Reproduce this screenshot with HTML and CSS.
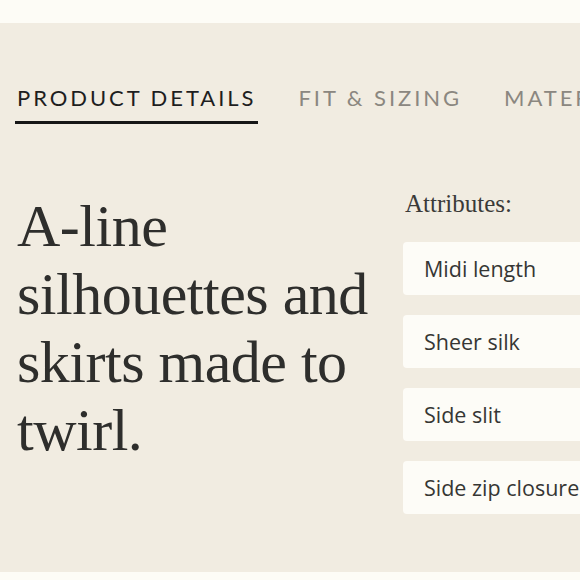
FILE: index.html
```html
<!DOCTYPE html>
<html>
<head>
<meta charset="utf-8">
<link rel="stylesheet" href="styles.css">
</head>
<body>
<div class="top-strip"></div>
<section class="panel">
  <nav class="tabs">
    <span class="tab active">PRODUCT DETAILS</span>
    <span class="tab">FIT &amp; SIZING</span>
    <span class="tab">MATERIALS &amp; CARE</span>
  </nav>
  <div class="content">
    <h1 class="headline">A-line silhouettes and skirts made to twirl.</h1>
    <div class="attrs">
      <div class="attrs-label">Attributes:</div>
      <ul class="attr-list">
        <li class="attr">Midi length</li>
        <li class="attr">Sheer silk</li>
        <li class="attr">Side slit</li>
        <li class="attr">Side zip closure</li>
      </ul>
    </div>
  </div>
</section>
<div class="bottom-strip"></div>
</body>
</html>
```

FILE: styles.css
```css
html, body {
  margin: 0;
  padding: 0;
  background: #fdfcf6;
  overflow: hidden;
}
body {
  width: 580px;
  height: 580px;
}
.top-strip {
  height: 23px;
  background: #fdfcf6;
}
.panel {
  height: 549px;
  background: #f1ece1;
  padding: 0 0 0 15px;
  box-sizing: border-box;
  overflow: hidden;
}
.bottom-strip {
  height: 8px;
  background: #fdfcf6;
}
.tabs {
  display: flex;
  gap: 38px;
  padding-top: 62px;
  white-space: nowrap;
  font-family: Lato, "Open Sans", sans-serif;
  font-size: 22px;
  letter-spacing: 2.95px;
  line-height: 26px;
}
.tab {
  color: #8b8780;
  padding: 0 2px 10px 2px;
  border-bottom: 3px solid transparent;
}
.tab.active {
  color: #1e1e1e;
  border-bottom-color: #161616;
}
.content {
  display: flex;
  padding-top: 71px;
  width: 720px;
}
.headline {
  margin: -3px 0 0 0;
  width: 386px;
  padding-left: 2px;
  font-family: "Liberation Serif", serif;
  font-weight: normal;
  font-size: 60px;
  line-height: 68px;
  color: #2e2e2c;
  letter-spacing: -0.5px;
}
.attrs {
  width: 280px;
}
.attrs-label {
  font-family: "Liberation Serif", serif;
  font-size: 25px;
  color: #3a3a38;
  line-height: 28px;
  margin-top: -5px;
  padding-left: 2px;
}
.attr-list {
  list-style: none;
  margin: 24px 0 0 0;
  padding: 0;
  display: flex;
  flex-direction: column;
  gap: 20px;
}
.attr {
  background: #fdfcf7;
  border-radius: 4px;
  height: 53px;
  display: flex;
  align-items: center;
  padding-left: 21px;
  font-family: "Open Sans", Lato, sans-serif;
  font-size: 21.5px;
  color: #363634;
  white-space: nowrap;
}
```
